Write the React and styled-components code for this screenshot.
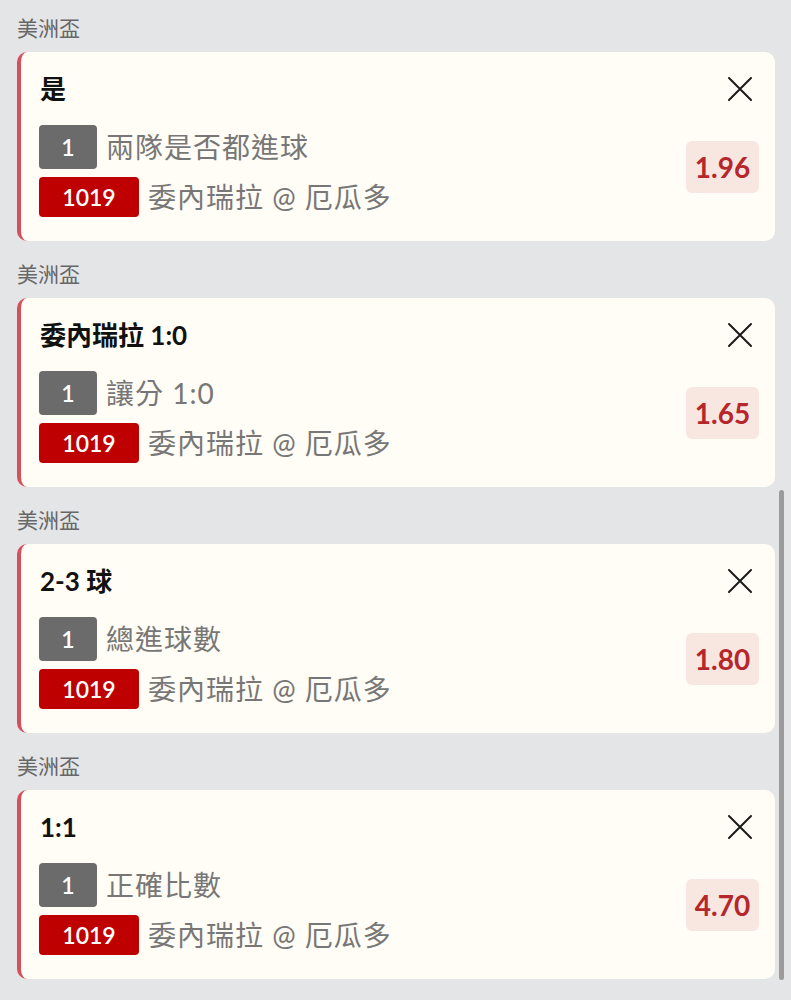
import React from 'react';
import styled, { createGlobalStyle } from 'styled-components';

const GlobalStyle = createGlobalStyle`
  html, body {
    margin: 0;
    padding: 0;
    background: #e4e5e7;
    font-family: Lato, "Noto Sans CJK TC", sans-serif;
  }
`;

const Page = styled.div`
  position: relative;
  width: 791px;
  height: 1000px;
  overflow: hidden;
  background: #e4e5e7;
  padding: 0 16px 0 17px;
  box-sizing: border-box;
  display: flex;
  flex-direction: column;
  gap: 5px;
`;

const Group = styled.section`
  display: flex;
  flex-direction: column;
`;

const League = styled.div`
  padding-top: 16px;
  height: 36px;
  line-height: 24px;
  font-size: 21px;
  color: #676767;
`;

const Card = styled.div`
  background: #fffdf5;
  border-left: 4px solid #d5505c;
  border-radius: 10px;
  padding: 22px 16px 24px 18px;
  height: 189px;
  box-sizing: border-box;
  display: flex;
  flex-direction: column;
`;

const TitleRow = styled.div`
  display: flex;
  align-items: center;
  justify-content: space-between;
  height: 30px;
  padding-right: 6px;
`;

const Title = styled.div`
  font-size: 26px;
  font-weight: 700;
  color: #111;
  line-height: 30px;
  padding-left: 1px;
`;

const CloseButton = styled.button`
  border: none;
  background: none;
  padding: 0;
  width: 26px;
  height: 26px;
  display: flex;
  align-items: center;
  justify-content: center;
  cursor: pointer;
`;

const Body = styled.div`
  margin-top: 21px;
  display: flex;
  align-items: center;
  justify-content: space-between;
`;

const Lines = styled.div`
  display: flex;
  flex-direction: column;
  gap: 8px;
`;

const Line = styled.div`
  display: flex;
  align-items: center;
  gap: 9px;
`;

const Badge = styled.span`
  display: inline-flex;
  align-items: center;
  justify-content: center;
  width: ${p => (p.$red ? '100px' : '58px')};
  height: ${p => (p.$red ? '40px' : '44px')};
  border-radius: 4px;
  background: ${p => (p.$red ? '#bf0000' : '#6b6b6b')};
  color: #fff;
  font-size: 23px;
  font-weight: 600;
`;

const LineText = styled.span`
  font-size: 28px;
  color: #777;
  letter-spacing: 1px;
  line-height: 40px;
`;

const Odds = styled.div`
  width: 73px;
  height: 52px;
  border-radius: 6px;
  background: #f8e6e1;
  color: #b5272a;
  font-size: 28px;
  font-weight: 700;
  display: flex;
  align-items: center;
  justify-content: center;
  margin-top: -8px;
`;

const ScrollThumb = styled.div`
  position: absolute;
  left: 779px;
  top: 490px;
  width: 5px;
  height: 490px;
  border-radius: 3px;
  background: #9b9b9b;
`;

const CloseIcon = () => (
  <svg width="26" height="26" viewBox="0 0 26 26" fill="none" stroke="#1a1a1a" strokeWidth="2" strokeLinecap="round">
    <path d="M2 2 L24 24 M24 2 L2 24" />
  </svg>
);

const bets = [
  { title: '是', market: '兩隊是否都進球', odds: '1.96' },
  { title: '委內瑞拉 1:0', market: '讓分 1:0', odds: '1.65' },
  { title: '2-3 球', market: '總進球數', odds: '1.80' },
  { title: '1:1', market: '正確比數', odds: '4.70' },
];

const App = () => (
  <>
    <GlobalStyle />
    <Page>
      {bets.map((bet, i) => (
        <Group key={i}>
          <League>美洲盃</League>
          <Card>
            <TitleRow>
              <Title>{bet.title}</Title>
              <CloseButton aria-label="remove">
                <CloseIcon />
              </CloseButton>
            </TitleRow>
            <Body>
              <Lines>
                <Line>
                  <Badge>1</Badge>
                  <LineText>{bet.market}</LineText>
                </Line>
                <Line>
                  <Badge $red>1019</Badge>
                  <LineText>委內瑞拉 @ 厄瓜多</LineText>
                </Line>
              </Lines>
              <Odds>{bet.odds}</Odds>
            </Body>
          </Card>
        </Group>
      ))}
      <ScrollThumb />
    </Page>
  </>
);

export default App;
